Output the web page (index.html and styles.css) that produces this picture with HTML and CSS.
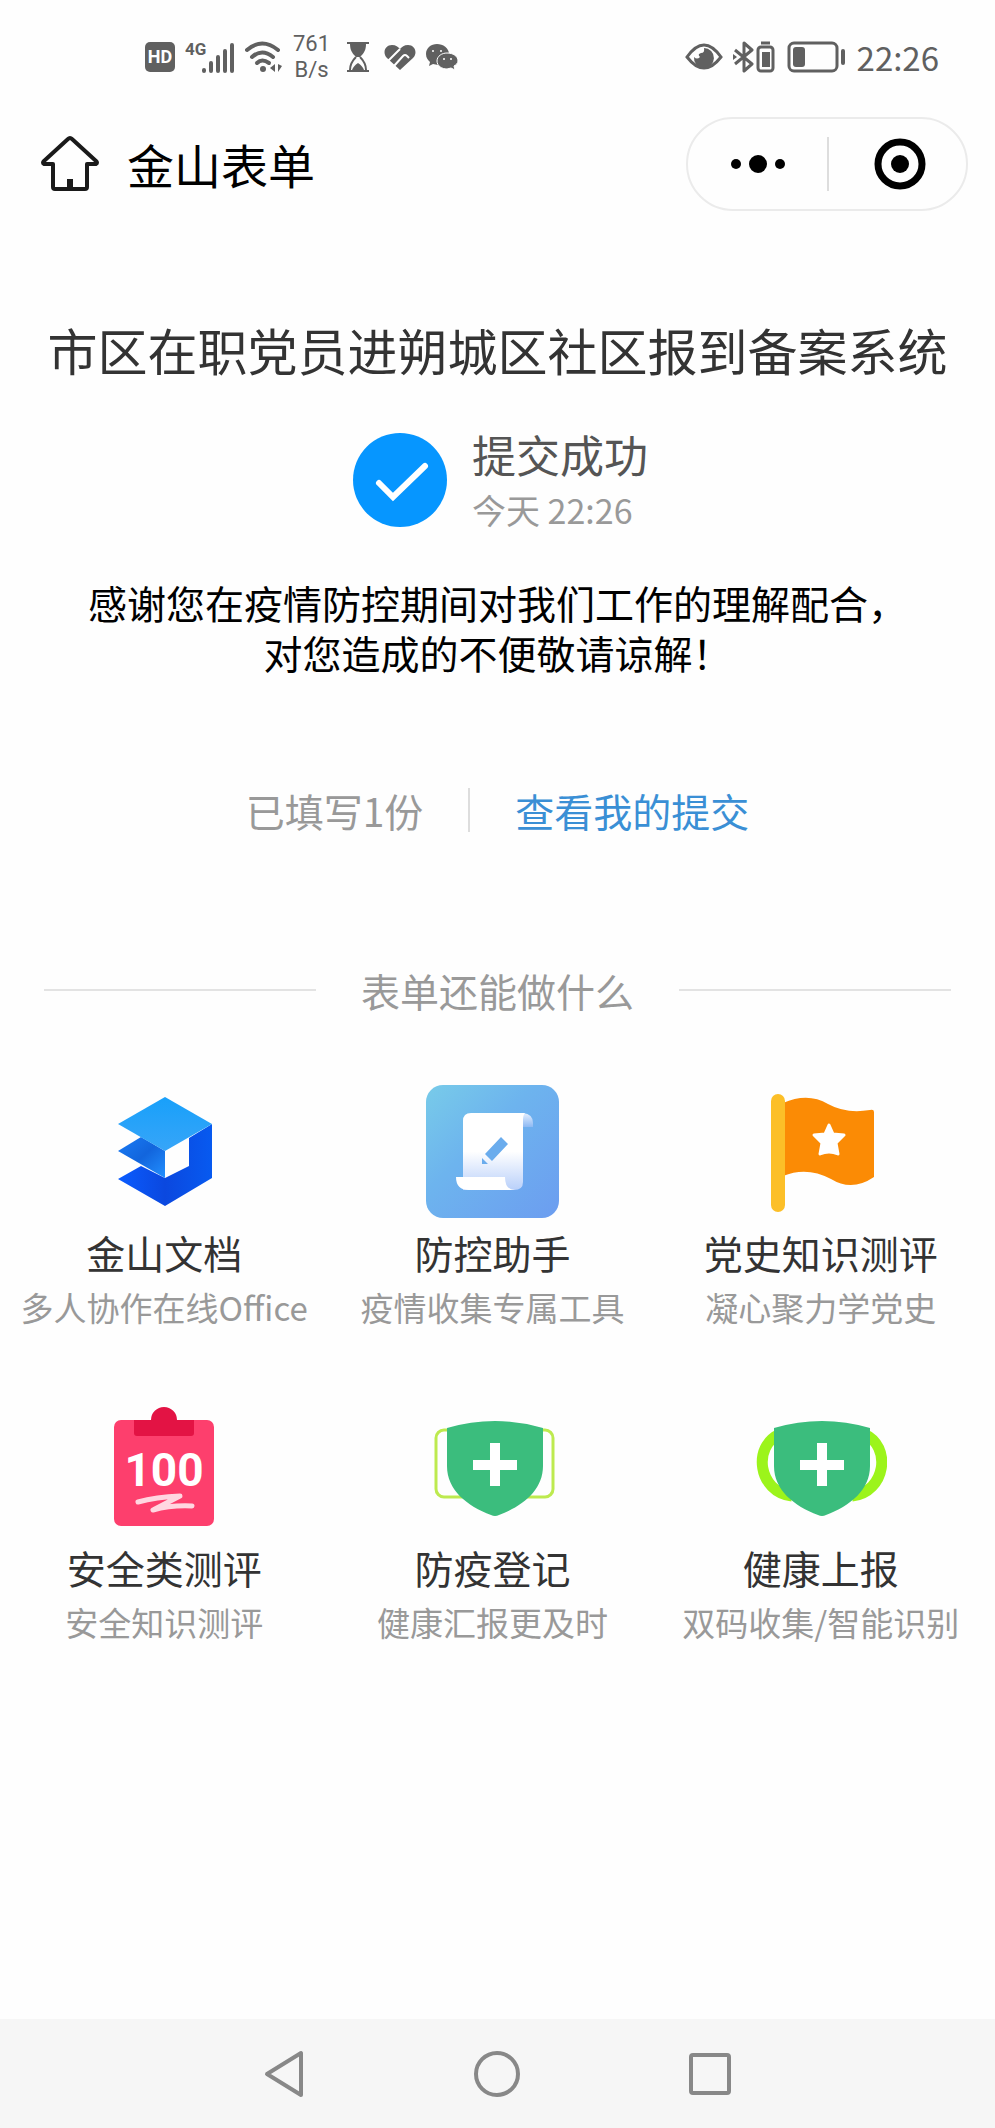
FILE: index.html
```html
<!DOCTYPE html>
<html lang="zh-CN">
<head>
    <meta charset="UTF-8">
    <meta name="viewport" content="width=device-width, initial-scale=1.0">
    <title>金山表单</title>
    <link rel="stylesheet" href="styles.css">
</head>
<body>
    <div class="status-bar">
        <div class="status-left">
            <svg width="30" height="32" viewBox="0 0 30 32">
                <rect x="0" y="1" width="30" height="30" rx="5" fill="#606060"/>
                <text class="hd-text" x="15" y="22" text-anchor="middle">HD</text>
            </svg>
            <svg class="signal" width="50" height="36" viewBox="0 -4 50 36">
                <text class="net-text" x="0" y="12">4G</text>
                <g stroke="#606060" stroke-width="4" stroke-linecap="round">
                    <path d="M19 28v-1M26 28v-8M33 28v-14M40 28V8M47 28V2"/>
                </g>
            </svg>
            <svg class="wifi" width="38" height="32" viewBox="0 0 38 32">
                <g fill="none" stroke="#606060" stroke-width="4" stroke-linecap="round">
                    <path d="M2 9Q17-4 33 9"/>
                    <path d="M7 16q10-9 21 0"/>
                    <path d="M12 22q5-5 12 0"/>
                </g>
                <circle cx="18" cy="28" r="3" fill="#606060"/>
                <path d="M30 23v8l-5-4zM33 23v8l4-6z" fill="#606060"/>
            </svg>
            <div class="speed">761<br>B/s</div>
            <svg class="hourglass" width="24" height="32" viewBox="0 0 24 32">
                <path d="M1 2h22M1 30h22" stroke="#606060" stroke-width="2"/>
                <path d="M4 3h16c0 6-2 9-6 13h-4C6 12 4 9 4 3z" fill="#606060"/>
                <path d="M10 16c-4 4-6 8-6 13M14 16c4 4 6 8 6 13" fill="none" stroke="#606060" stroke-width="2"/>
                <path d="M6 29c1-3 3-5 6-7 3 2 5 4 6 7z" fill="#606060"/>
            </svg>
            <svg width="32" height="32" viewBox="0 0 32 32">
                <path d="M16 29L3 17C-2 12 1 4 8 4c4 0 6 2 8 4 2-2 4-4 8-4 7 0 10 8 5 13z" fill="#606060"/>
                <path d="M4 20L16 8M10 25l9-10q2-2 4 0l2 2" fill="none" stroke="#fefefe" stroke-width="2"/>
            </svg>
            <svg width="32" height="32" viewBox="0 0 32 32">
                <path d="M11 3C5 3 0 7 0 13c0 4 2 6 4 8l-1 4 4-2 5 1c6 0 11-5 11-11S17 3 11 3z" fill="#606060"/>
                <path d="M21 12c-5 0-10 3-10 8s5 8 10 8l4-1 4 2-1-4c2-1 4-3 4-5 0-5-5-8-11-8z" fill="#606060" stroke="#fff"/>
                <g fill="#fff"><circle cx="7" cy="10" r="1"/><circle cx="15" cy="10" r="1"/><circle cx="18" cy="18" r="1"/><circle cx="25" cy="18" r="1"/></g>
            </svg>
        </div>
        <div class="status-right">
            <svg width="38" height="32" viewBox="0 0 38 32">
                <path d="M2 16Q19-8 36 16 19 38 2 16z" fill="none" stroke="#606060" stroke-width="3"/>
                <path d="M19 7a10 10 0 1 1-10 9q3 3 6 0-3-3 1-4 4 0 3-5z" fill="#606060"/>
            </svg>
            <svg class="bluetooth" width="44" height="32" viewBox="0 0 44 32">
                <path d="M2 9l17 14-8 7V2l8 7L2 23" fill="none" stroke="#606060" stroke-width="3" stroke-linejoin="round"/>
                <path d="M0 13l4 3-4 3z" fill="#606060"/>
                <path d="M28 2h9" stroke="#606060" stroke-width="3"/>
                <rect x="25" y="6" width="15" height="24" rx="3" fill="none" stroke="#606060" stroke-width="3"/>
                <rect x="29" y="11" width="8" height="15" fill="#606060"/>
            </svg>
            <svg width="60" height="32" viewBox="0 0 60 32">
                <rect x="2" y="2" width="48" height="28" rx="5" fill="none" stroke="#606060" stroke-width="3"/>
                <rect x="6" y="6" width="12" height="20" rx="3" fill="#606060"/>
                <path d="M56 10v12" stroke="#606060" stroke-width="4" stroke-linecap="round"/>
            </svg>
            <span class="clock">22:26</span>
        </div>
    </div>

    <header class="app-bar">
        <a class="home" href="#" aria-label="首页">
            <svg width="58" height="56" viewBox="0 0 58 56">
                <path d="M12 28H3q-2-1 0-3L27 3q2-2 4 0l24 22q2 2 0 3h-9v23q0 2-2 2H14q-2 0-2-2z" fill="none" stroke="#1a1a1a" stroke-width="4" stroke-linejoin="round"/>
                <path d="M29 43v10" stroke="#1a1a1a" stroke-width="6"/>
            </svg>
        </a>
        <span class="app-name">金山表单</span>
        <div class="capsule">
            <button type="button" aria-label="更多">
                <svg width="56" height="54" viewBox="0 0 56 54">
                    <circle cx="6" cy="27" r="5"/><circle cx="28" cy="27" r="9"/><circle cx="50" cy="27" r="5"/>
                </svg>
            </button>
            <button type="button" aria-label="关闭">
                <svg width="54" height="54" viewBox="0 0 54 54">
                    <circle cx="27" cy="27" r="22" fill="none" stroke="#000" stroke-width="7"/>
                    <circle cx="27" cy="27" r="9"/>
                </svg>
            </button>
        </div>
    </header>

    <main>
        <h1>市区在职党员进朔城区社区报到备案系统</h1>

        <div class="result">
            <svg width="94" height="94" viewBox="0 0 94 94">
                <circle cx="47" cy="47" r="47" fill="#0696ff"/>
                <path d="M26 50l14 14 32-31" fill="none" stroke="#fff" stroke-width="6" stroke-linecap="round"/>
            </svg>
            <div class="result-text">
                <div class="result-title">提交成功</div>
                <div class="result-time">今天 22:26</div>
            </div>
        </div>

        <p class="thanks">感谢您在疫情防控期间对我们工作的理解配合，<br>对您造成的不便敬请谅解！</p>

        <div class="records">
            <span>已填写1份</span>
            <a href="#">查看我的提交</a>
        </div>

        <h2>表单还能做什么</h2>

        <div class="apps">
            <a class="app" href="#">
                <svg width="133" height="133" viewBox="0 0 133 133">
                    <defs>
                        <linearGradient id="top" x1="0" y1="0" x2="0" y2="1"><stop offset="0" stop-color="#18a0fa"/><stop offset="1" stop-color="#37a5f8"/></linearGradient>
                        <linearGradient id="mid" x1="0" y1="0" x2="1" y2="1"><stop offset="0" stop-color="#1a7cf5"/><stop offset=".5" stop-color="#1265dd"/><stop offset="1" stop-color="#2290ff"/></linearGradient>
                        <linearGradient id="low" x1="0" y1="0" x2="1" y2="0"><stop offset="0" stop-color="#0a5cff"/><stop offset=".5" stop-color="#0b48df"/><stop offset="1" stop-color="#075af0"/></linearGradient>
                    </defs>
                    <path d="M20 94l23-13 24 12 24-12V53l23-14v54l-47 28z" fill="url(#low)"/>
                    <path d="M20 66l23-14 24 14v27z" fill="url(#mid)"/>
                    <path d="M67 12l47 27-47 27-47-27z" fill="url(#top)"/>
                </svg>
                <span class="app-title">金山文档</span>
                <span class="app-desc">多人协作在线Office</span>
            </a>
            <a class="app" href="#">
                <svg width="133" height="133" viewBox="0 0 133 133">
                    <defs>
                        <linearGradient id="tile" x1="0" y1="0" x2="1" y2="1"><stop offset="0" stop-color="#78cbe9"/><stop offset=".4" stop-color="#6db4ee"/><stop offset="1" stop-color="#6c9df0"/></linearGradient>
                        <linearGradient id="paper" x1="0" y1="0" x2="0" y2="1"><stop offset=".5" stop-color="#fff"/><stop offset="1" stop-color="#b9d0fa"/></linearGradient>
                        <linearGradient id="curl" x1="0" y1="0" x2="0" y2="1"><stop offset="0" stop-color="#e4efff"/><stop offset="1" stop-color="#8db9f3"/></linearGradient>
                    </defs>
                    <rect width="133" height="133" rx="17" fill="url(#tile)"/>
                    <path d="M97 28q10 1 10 10v4H97z" fill="url(#curl)"/>
                    <path d="M37 36q0-8 8-8h54q-2 2-2 7v62q0 8-9 8H37z" fill="url(#paper)"/>
                    <path d="M30 92h49q0 13 10 13H43q-13 0-13-13z" fill="#fff"/>
                    <path d="M75 52l7 7-16 17-7-7zM56 73l6 6h-6z" fill="#6aaced"/>
                </svg>
                <span class="app-title">防控助手</span>
                <span class="app-desc">疫情收集专属工具</span>
            </a>
            <a class="app" href="#">
                <svg width="133" height="133" viewBox="0 0 133 133">
                    <path d="M29 18q25-11 45 1 18 10 42 6 4-1 4 2v65q-22 15-43 2-24-13-48-3z" fill="#fb8b05"/>
                    <rect x="17" y="9" width="14" height="118" rx="7" fill="#fcbf28"/>
                    <path d="M75 40l4 9 11 1-8 8 2 11q-9-4-18 0l2-11-8-8 11-1z" fill="#fff" stroke="#fff" stroke-width="3" stroke-linejoin="round"/>
                </svg>
                <span class="app-title">党史知识测评</span>
                <span class="app-desc">凝心聚力学党史</span>
            </a>
            <a class="app" href="#">
                <svg width="133" height="133" viewBox="0 0 133 133">
                    <rect x="16" y="20" width="100" height="106" rx="7" fill="#fd3f6d"/>
                    <path d="M36 20h17a13 13 0 0 1 26 0h17v13q0 3-3 3H39q-3 0-3-3z" fill="#e31344"/>
                    <text class="score" x="66" y="86" text-anchor="middle">100</text>
                    <path d="M40 102q18-5 42-6L55 110q18-5 39-4" fill="none" stroke="#ffd7e1" stroke-width="5" stroke-linecap="round" stroke-linejoin="round"/>
                </svg>
                <span class="app-title">安全类测评</span>
                <span class="app-desc">安全知识测评</span>
            </a>
            <a class="app" href="#">
                <svg width="133" height="133" viewBox="0 0 133 133">
                    <rect x="10" y="30" width="117" height="67" rx="8" fill="none" stroke="#bdea4f" stroke-width="3"/>
                    <path d="M21 28q48-14 96 0v38c0 24-20 40-44 49q-4 2-8 0C41 106 21 90 21 66z" fill="#3bbd7d"/>
                    <path d="M69 43v43M47 65h44" stroke="#fff" stroke-width="10"/>
                </svg>
                <span class="app-title">防疫登记</span>
                <span class="app-desc">健康汇报更及时</span>
            </a>
            <a class="app" href="#">
                <svg width="133" height="133" viewBox="0 0 133 133">
                    <path d="M38 96C4 92-2 46 26 34M98 96C132 92 138 46 110 34" fill="none" stroke="#9cf41b" stroke-width="11"/>
                    <path d="M20 28q48-14 96 0v38c0 24-20 40-44 49q-4 2-8 0C40 106 20 90 20 66z" fill="#3bbd7d"/>
                    <path d="M68 43v43M46 65h44" stroke="#fff" stroke-width="10"/>
                </svg>
                <span class="app-title">健康上报</span>
                <span class="app-desc">双码收集/智能识别</span>
            </a>
        </div>
    </main>

    <nav class="nav-bar">
        <button type="button" aria-label="返回">
            <svg width="46" height="50" viewBox="0 0 46 50"><path d="M39 4v42L5 25z"/></svg>
        </button>
        <button type="button" aria-label="主屏幕">
            <svg width="50" height="50" viewBox="0 0 50 50"><circle cx="25" cy="25" r="21"/></svg>
        </button>
        <button type="button" aria-label="最近任务">
            <svg width="50" height="50" viewBox="0 0 50 50"><rect x="6" y="6" width="38" height="38" rx="2"/></svg>
        </button>
    </nav>
</body>
</html>
```
FILE: styles.css
```css
* { box-sizing: border-box; }
body {
    display: flex;
    flex-direction: column;
    min-height: 100vh;
    margin: 0;
    background: #fefefe;
    color: #333;
    font-family: "Noto Sans CJK SC", sans-serif;
}
svg { display: block; flex: none; }
a { color: inherit; text-decoration: none; }
button { display: flex; align-items: center; justify-content: center; padding: 0; border: 0; background: none; }

/* phone status bar */
.status-bar { display: flex; justify-content: space-between; align-items: center; height: 114px; padding: 0 56px 0 145px; color: #606060; }
.status-left, .status-right { display: flex; align-items: center; gap: 10px; }
.speed { margin-right: 6px; font: 22px/26px Roboto, sans-serif; text-align: center; }
.hourglass { margin-right: 4px; }
.hd-text { font: bold 18px Roboto, sans-serif; fill: #fff; }
.net-text { font: bold 17px Roboto, sans-serif; fill: #606060; }
.clock { font-size: 33px; line-height: 40px; }

/* mini program header */
.app-bar { display: flex; align-items: center; height: 100px; padding: 0 27px 0 41px; }
.app-name { margin-left: 28px; color: #000; font-size: 47px; line-height: 60px; }
.capsule { display: flex; width: 282px; height: 94px; margin-left: auto; padding: 18px 0; border: 2px solid #ebebeb; border-radius: 47px; }
.capsule button { width: 50%; }
.capsule button + button { padding-left: 4px; border-left: 2px solid #ddd; }

main { flex: 1; }
h1 { margin: 105px 0 43px; font-size: 50px; line-height: 60px; font-weight: 400; text-align: center; }
.result { display: flex; justify-content: center; align-items: center; gap: 25px; padding-left: 6px; }
.result-text { padding-bottom: 4px; }
.result-title { color: #555; font-size: 44px; line-height: 64px; }
.result-time { color: #999; font-size: 34px; line-height: 48px; }
.thanks { margin: 39px 0 111px; color: #000; font-size: 39px; line-height: 50px; text-align: center; }
.records { display: flex; justify-content: center; align-items: center; color: #999; font-size: 39px; line-height: 44px; }
.records span { padding-right: 45px; border-right: 2px solid #ddd; }
.records a { padding-left: 45px; color: #3a8fd5; }
h2 { display: flex; align-items: center; gap: 45px; margin: 133px 44px 70px; color: #999; font-size: 39px; line-height: 50px; font-weight: 400; }
h2::before, h2::after { content: ""; flex: 1; height: 2px; background: #e3e3e3; }

.apps { display: grid; grid-template-columns: repeat(3, 1fr); row-gap: 70px; padding-right: 10px; }
.app { display: flex; flex-direction: column; align-items: center; white-space: nowrap; }
.app-title { margin: 8px 0 6px; font-size: 39px; line-height: 52px; }
.app-desc { color: #999; font-size: 33px; line-height: 46px; }
.score { font: bold 46px Roboto, sans-serif; fill: #fff; }

.nav-bar { display: flex; height: 109px; padding: 0 18%; background: #f6f6f6; }
.nav-bar button { flex: 1; }
.nav-bar svg { fill: none; stroke: #888; stroke-width: 4; stroke-linejoin: round; }
```
